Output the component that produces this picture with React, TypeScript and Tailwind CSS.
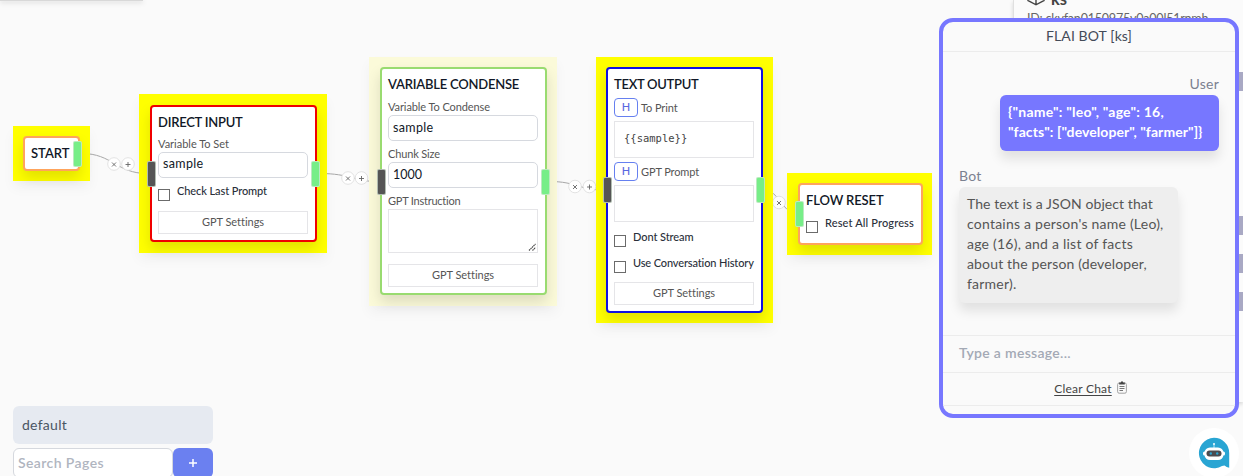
import React from "react";

const Title = ({ children, className = "" }: { children: React.ReactNode; className?: string }) => (
  <h3 className={`h-5 whitespace-nowrap text-[13px] font-semibold leading-5 text-[#111827] ${className}`}>{children}</h3>
);

const Label = ({ children, className = "" }: { children: React.ReactNode; className?: string }) => (
  <div className={`h-4 whitespace-nowrap text-[11px] leading-4 text-[#555] ${className}`}>{children}</div>
);

const Field = ({ children, className = "" }: { children: React.ReactNode; className?: string }) => (
  <div className={`flex h-[26px] items-center rounded-[5px] border border-[#d6d9df] bg-white px-1 text-[12.5px] text-[#111827] ${className}`}>
    {children}
  </div>
);

const LabelledField = ({ label, value, labelClass, valueClass = "" }: { label: string; value: string; labelClass: string; valueClass?: string }) => (
  <div className="flex flex-col">
    <Label className={labelClass}>{label}</Label>
    <Field className={valueClass}>{value}</Field>
  </div>
);

const SettingsButton = () => (
  <button className="flex h-[23px] items-center justify-center border border-[#e5e5e8] text-[11px] tracking-[-0.02px] text-[#555]">
    GPT Settings
  </button>
);

const Check = ({ label, text }: { label: string; text: string }) => (
  <label className="flex h-4 items-start gap-[7px] whitespace-nowrap text-[11px] font-medium leading-4 text-[#2a2f3a]">
    <span className="flex pt-1.5">
      <span className="size-3 border-[1.5px] border-[#6b6b6b] bg-white" />
    </span>
    <span className={text}>{label}</span>
  </label>
);

const HRow = ({ label, text }: { label: string; text: string }) => (
  <div className="flex items-center gap-[3px]">
    <span className="flex h-[19px] w-6 items-center justify-center rounded-[4px] border border-[#6680f0] text-[11px] font-medium text-[#5a68e0]">H</span>
    <Label className={text}>{label}</Label>
  </div>
);

const Port = ({ className }: { className: string }) => (
  <span className={`absolute h-[26px] w-[9px] rounded-[2px] border border-[#d8e8d8]/70 ${className}`} />
);

const Node = ({ halo, card, ports, children }: { halo: string; card: string; ports: React.ReactNode; children: React.ReactNode }) => (
  <section className={`absolute flex shadow-[0_7px_12px_rgba(0,0,0,0.04)] ${halo}`}>
    <div className={`flex flex-1 flex-col rounded-[4px] border-2 bg-white pl-1.5 pr-[7px] pt-[5px] shadow-[0_7px_14px_rgba(0,0,0,0.12)] ${card}`}>
      {children}
    </div>
    {ports}
  </section>
);

const Chip = ({ x, y, plus = false }: { x: number; y: number; plus?: boolean }) => (
  <g transform={`translate(${x} ${y})`}>
    <circle r="6.3" fill="#fff" stroke="#dcdcdc" strokeWidth="0.8" />
    <path d={plus ? "M-2.5 0.5H2.5M0-2V3" : "M-2-1.5L2 2.5M2-1.5L-2 2.5"} stroke="#666" strokeWidth="0.9" />
  </g>
);

const Edges = () => (
  <svg className="absolute inset-0" width="1243" height="476" fill="none">
    <g stroke="#a8a8a8" strokeWidth="1">
      <path d="M82 153.5C112 153.5 117 173.5 147 173.5" />
      <path d="M320 173.5C350 173.5 355 181.5 377 181.5" />
      <path d="M550 181.5C576 181.5 580 190 603 190" />
      <path d="M765 190C778 190 783 213 795 213" />
    </g>
    <Chip x={114} y={164} />
    <Chip x={128} y={164} plus />
    <Chip x={348} y={178} />
    <Chip x={361.5} y={178} plus />
    <Chip x={575} y={186.5} />
    <Chip x={589.5} y={186.5} plus />
    <Chip x={779} y={202.5} />
  </svg>
);

const Sidebar = () => (
  <aside className="absolute right-0 top-0 flex h-[402px] w-[230px] flex-col border-l border-[#e0e0e0] bg-[#fbfbfb] shadow-[0_2px_4px_rgba(0,0,0,0.15)]">
    <div className="flex h-[72px] flex-col pl-3">
      <div className="flex h-1.5 items-end gap-[5px] text-[16.5px] font-bold leading-[14px] text-[#444]">
        <svg width="20" height="20" viewBox="0 0 19 20" fill="none" stroke="#444" strokeWidth="1.4" className="shrink-0">
          <path d="M9.500 1L17.500 5V14.500L9.500 18.800L1.500 14.500V5ZM1.500 5L9.500 10L17.500 5M9.500 10V18.800" />
        </svg>
        ks
      </div>
      <div className="whitespace-nowrap pl-px pt-[5px] text-[12.5px] leading-4 tracking-[-0.2px] text-[#666]">ID: ckvfan0150975v0a00l51rnmh</div>
    </div>
    <div className="flex flex-col items-end">
      <span className="h-[19px] w-[5px] bg-[#a9a9c4]" />
      <div className="flex flex-col gap-[19px] pt-[125px]">
        <span className="h-[19px] w-[5px] bg-[#a9a9c4]" />
        <span className="h-[19px] w-[5px] bg-[#a9a9c4]" />
        <span className="h-[19px] w-[5px] bg-[#a9a9c4]" />
      </div>
    </div>
  </aside>
);

const Chat = () => (
  <section className="absolute left-[939px] top-[18px] flex h-[400px] w-[300px] flex-col rounded-[14px] border-4 border-[#7777ff] bg-[#fafafa] text-[14px]">
    <header className="flex h-[30px] items-center justify-center border-b border-[#ececec] pb-0.5 tracking-[0.1px] text-[#444b58]">FLAI BOT [ks]</header>
    <div className="flex h-[283px] flex-col gap-[15px] px-4 pt-[22px]">
      <div className="flex flex-col items-end">
        <div className="h-[21px] leading-5 tracking-[0.25px] text-[#7b8190]">User</div>
        <div className="h-14 w-[219px] whitespace-nowrap rounded-md bg-[#7777ff] px-2 py-[7px] font-bold leading-5 text-white shadow-[0_8px_12px_rgba(0,0,0,0.1)]">
          <div className="tracking-[0.22px]">{'{"name": "leo", "age": 16,'}</div>
          <div className="tracking-[0.07px]">{'"facts": ["developer", "farmer"]}'}</div>
        </div>
      </div>
      <div className="flex flex-col items-start">
        <div className="h-[21px] leading-5 tracking-[0.24px] text-[#7b8190]">Bot</div>
        <div className="h-[116px] w-[219px] whitespace-nowrap rounded-md bg-[#eee] px-2 py-[7px] leading-5 text-[#555] shadow-[0_8px_12px_rgba(0,0,0,0.1)]">
          <div className="tracking-[0.08px]">The text is a JSON object that</div>
          <div className="tracking-[0.23px]">contains a person's name (Leo),</div>
          <div className="tracking-[0.23px]">age (16), and a list of facts</div>
          <div className="tracking-[0.15px]">about the person (developer,</div>
          <div className="tracking-[0.23px]">farmer).</div>
        </div>
      </div>
    </div>
    <div className="flex h-[37px] items-center border-t border-[#ececec] px-4 pb-[3px] font-semibold tracking-[0.31px] text-[#a3a9b5]">Type a message...</div>
    <div className="flex h-[34px] items-center justify-center gap-[5px] border-y border-[#ececec] pl-[3px] text-[12px] tracking-[0.23px] text-[#444]">
      <span className="underline underline-offset-2">Clear Chat</span>
      <span className="flex pb-1">
        <svg width="10" height="13" viewBox="0 0 10 13" fill="none">
          <rect x="0.6" y="2" width="8.8" height="10.2" rx="1.500" stroke="#999" strokeWidth="0.9" />
          <path d="M2.200 3.500V1.500H4V0.500H6V1.500H7.800V3.500Z" fill="#444" />
          <path d="M2.500 5.500H7.500M2.500 7.500H7.500M2.500 9.500H6" stroke="#666" strokeWidth="0.9" />
        </svg>
      </span>
    </div>
  </section>
);

export default function App() {
  return (
    <main className="relative h-[476px] overflow-hidden bg-[#fafafa] font-['Lato',sans-serif]">
      <div className="flex h-px w-[143px] bg-[#d8d8d8] shadow-[0_1px_5px_rgba(0,0,0,0.35)]" />
      <Edges />

      <Node
        halo="left-[13px] top-[126px] h-[55px] w-[77px] bg-[#ff0] p-2.5"
        card="border-[#ffa45c]"
        ports={<Port className="left-[60px] top-[15px] bg-[#77ee88]" />}
      >
        <Title className="tracking-[-0.02px]">START</Title>
      </Node>

      <Node
        halo="left-[139px] top-[94px] h-[159px] w-[188px] bg-[#ff0] py-[11px] pl-[11px] pr-2.5"
        card="border-[#f00000]"
        ports={
          <>
            <Port className="left-[8px] top-[67px] bg-[#555]" />
            <Port className="left-[172px] top-[67px] bg-[#77ee88]" />
          </>
        }
      >
        <Title className="tracking-[-0.24px]">DIRECT INPUT</Title>
        <div className="flex flex-col pt-1">
          <LabelledField label="Variable To Set" value="sample" labelClass="tracking-[-0.01px]" valueClass="pb-px tracking-[0.35px]" />
        </div>
        <div className="flex flex-col gap-3 pt-[5px]">
          <Check label="Check Last Prompt" text="tracking-[-0.09px]" />
          <SettingsButton />
        </div>
      </Node>

      <Node
        halo="left-[369px] top-[57px] h-[249px] w-[188px] bg-[#fbfad9] pb-[11px] pl-[11px] pr-2.5 pt-2.5"
        card="border-[#99db70]"
        ports={
          <>
            <Port className="left-[8px] top-[112px] bg-[#555]" />
            <Port className="left-[172px] top-[112px] bg-[#77ee88]" />
          </>
        }
      >
        <Title className="tracking-[-0.22px]">VARIABLE CONDENSE</Title>
        <div className="flex flex-col gap-[5px] pt-[5px]">
          <LabelledField label="Variable To Condense" value="sample" labelClass="tracking-[-0.09px]" valueClass="tracking-[0.35px]" />
          <LabelledField label="Chunk Size" value="1000" labelClass="tracking-[-0.14px]" />
          <div className="flex flex-col">
            <Label className="tracking-[-0.23px]">GPT Instruction</Label>
            <div className="flex h-11 items-end justify-end border border-[#e5e5e8] p-px">
              <svg width="8" height="8" stroke="#444" strokeWidth="1.1" strokeDasharray="1.5 0.6" fill="none">
                <path d="M1 7.500L7.500 1M4.500 7.500L7.500 4.500" />
              </svg>
            </div>
          </div>
        </div>
        <div className="flex flex-col pt-[11px]">
          <SettingsButton />
        </div>
      </Node>

      <Node
        halo="left-[596px] top-[57px] h-[266px] w-[177px] bg-[#ff0] p-2.5"
        card="border-[#1010e0]"
        ports={
          <>
            <Port className="left-[7px] top-[120px] bg-[#555]" />
            <Port className="left-[160px] top-[120px] bg-[#77ee88]" />
          </>
        }
      >
        <Title className="tracking-[-0.27px]">TEXT OUTPUT</Title>
        <div className="flex flex-col gap-1 pt-1">
          <HRow label="To Print" text="tracking-[-0.11px]" />
          <div className="flex h-[37px] items-center border border-[#e5e5e8] pb-0.5 pl-[9px] font-['DejaVu_Sans_Mono',monospace] text-[10.5px] text-[#444]">
            {"{{sample}}"}
          </div>
          <HRow label="GPT Prompt" text="tracking-[-0.12px]" />
          <div className="h-[37px] border border-[#e5e5e8]" />
        </div>
        <div className="flex flex-col gap-2.5 pb-[11px] pt-[7px]">
          <Check label="Dont Stream" text="tracking-[-0.08px]" />
          <Check label="Use Conversation History" text="tracking-[-0.13px]" />
        </div>
        <SettingsButton />
      </Node>

      <Node
        halo="left-[787px] top-[173px] h-[82px] w-[145px] bg-[#ff0] py-2.5 pl-[11px] pr-2.5"
        card="border-[#ffa45c]"
        ports={<Port className="left-[8px] top-[28px] bg-[#77ee88]" />}
      >
        <Title className="tracking-[-0.12px]">FLOW RESET</Title>
        <div className="flex flex-col pt-[5px]">
          <Check label="Reset All Progress" text="tracking-[0.14px]" />
        </div>
      </Node>

      <div className="absolute left-[13px] top-[406px] flex w-[200px] flex-col gap-1">
        <div className="flex h-[38px] items-center rounded-md bg-[#e6eaf1] px-[9px] pb-0.5 text-[14px] tracking-[0.27px] text-[#4b5563]">default</div>
        <div className="flex h-[30px]">
          <div className="flex w-40 items-center rounded-md border border-[#d5d8de] bg-white px-1 pb-0.5 text-[14px] font-semibold tracking-[0.4px] text-[#b0b5bf]">
            Search Pages
          </div>
          <button className="flex flex-1 items-center justify-center rounded-md bg-[#6b80f0] text-white">
            <svg width="8" height="8" stroke="currentColor" strokeWidth="1.5"><path d="M4 0V8M0 4H8" /></svg>
          </button>
        </div>
      </div>

      <Sidebar />
      <Chat />

      <div className="absolute left-[1189px] top-[428px] flex size-[50px] items-center justify-center rounded-full bg-white">
        <svg width="32" height="32" viewBox="-16 -16 32 32">
          <path d="M0-15.200A15.200 15.200 0 0 1 15.200 0V14.800Q12.500 14.500 10.500 12.500L8 13A15.200 15.200 0 1 1 0-15.200Z" fill="#29a5d3" />
          <circle cy="-9" r="1" fill="#fff" />
          <path d="M0-9V-5" stroke="#d9f3fc" strokeWidth="0.8" />
          <rect x="-9.500" y="-5.500" width="19" height="12.500" rx="5.500" fill="#fff" />
          <rect x="-11" y="-1.500" width="22" height="4" rx="1.500" fill="#fff" />
          <rect x="-7.500" y="-2.500" width="15" height="6" rx="3" fill="#4b4b4f" />
          <circle cx="-3.200" cy="0.500" r="1.200" fill="#29a5d3" />
          <circle cx="3.200" cy="0.500" r="1.200" fill="#29a5d3" />
        </svg>
      </div>
    </main>
  );
}
